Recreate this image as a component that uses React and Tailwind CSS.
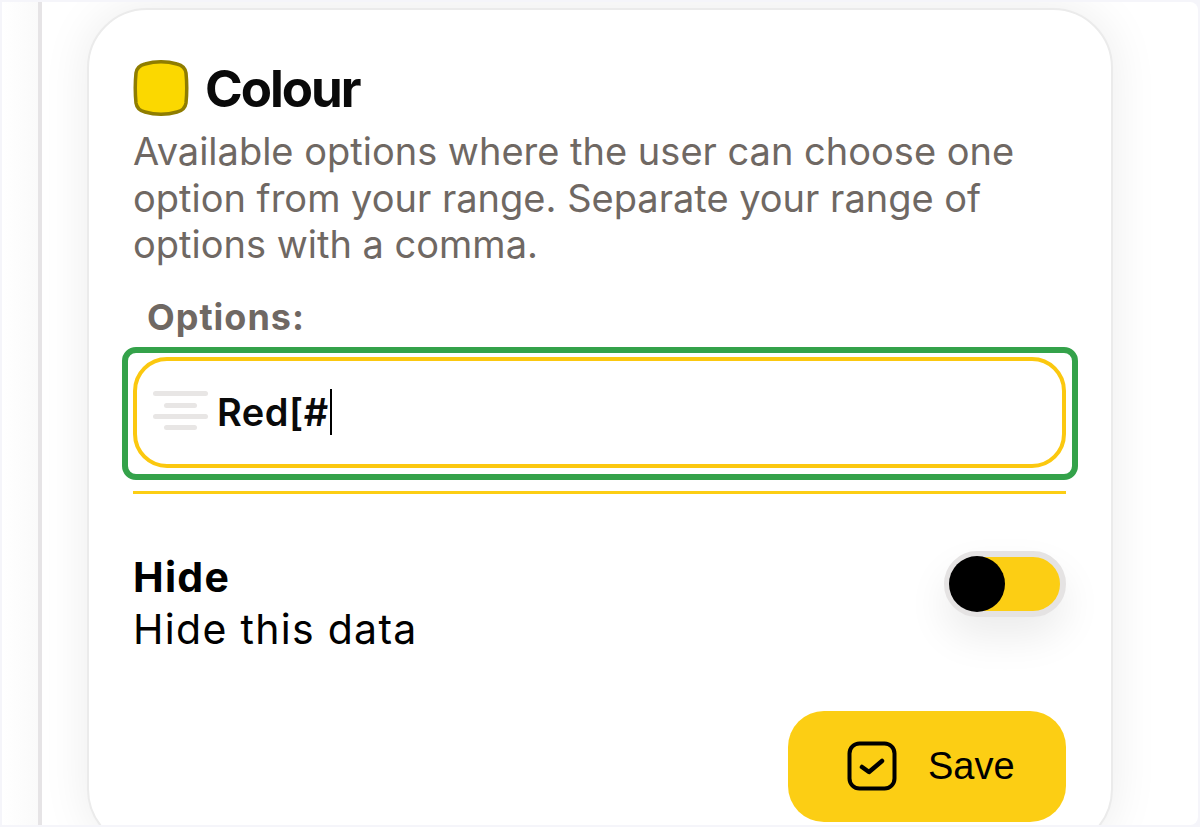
import React from "react";

const BarrelIcon = () => (
  <svg width="56" height="56" viewBox="0 0 56 56" className="shrink-0">
    <path
      d="M12 4 Q28 -0.500 44 4 Q52 6 53 13 Q54.500 28 53 43 Q52 50 44 52 Q28 56.500 12 52 Q4 50 3 43 Q1.500 28 3 13 Q4 6 12 4 Z"
      fill="#fbd800"
      stroke="#8f7d00"
      strokeWidth="3.500"
    />
  </svg>
);

const LinesIcon = () => (
  <svg width="56" height="44" viewBox="0 0 56 44" className="shrink-0">
    <rect x="0" y="1" width="55" height="5" rx="2.500" fill="#e8e6e5" />
    <rect x="11" y="13" width="33" height="5" rx="2.500" fill="#e8e6e5" />
    <rect x="0" y="24" width="55" height="5" rx="2.500" fill="#e8e6e5" />
    <rect x="11" y="35" width="33" height="5" rx="2.500" fill="#e8e6e5" />
  </svg>
);

const CheckSquare = () => (
  <svg width="50" height="50" viewBox="0 0 50 50" fill="none" className="shrink-0">
    <rect x="2.500" y="2.500" width="45" height="45" rx="10" stroke="#000" strokeWidth="4" />
    <path d="M15 26 L22 31 L35 20" stroke="#000" strokeWidth="4.500" strokeLinecap="round" strokeLinejoin="round" />
  </svg>
);

export default function App() {
  return (
    <div className="h-[827px] w-[1200px] overflow-hidden bg-[#f5f5fa] p-[2px]" style={{ fontFamily: "Inter, 'Noto Sans', sans-serif" }}>
      <div className="flex h-full rounded-lg bg-white">
        <div className="w-[40px] shrink-0 border-r-[4px] border-[#e6e4e6] bg-gradient-to-r from-white to-[#fafafa]" />
        <div className="flex-1 overflow-hidden pl-[45px] pt-[6px]">
          <div className="h-[841px] w-[1026px] rounded-[60px] border-2 border-[#ebebeb] bg-white px-[44px] pt-[50px] shadow-[0_0_48px_rgba(0,0,0,0.08)]">
            <div className="flex h-[56px] items-center gap-[16px]">
              <BarrelIcon />
              <h1 className="text-[51px] font-bold leading-none tracking-[-2px] text-[#0a0a0a]">Colour</h1>
            </div>
            <p className="mt-[12px] w-[920px] text-[38px] leading-[46.500px] text-[#6f6863]">
              Available options where the user can choose one option from your range. Separate your range of options with a comma.
            </p>
            <label className="mt-[27px] block pl-[14px] text-[36px] font-bold leading-[44px] tracking-[1px] text-[#6f6863]">Options:</label>
            <div className="relative mt-[18px] flex h-[111px] w-[933px] items-center rounded-[34px] border-[4px] border-[#fbc80f] pl-[16px]">
              <LinesIcon />
              <span className="ml-[8px] text-[38px] font-semibold leading-none tracking-[0.500px] text-[#0a0a0a]">Red[#</span>
              <span className="ml-[1px] h-[46px] w-[2px] bg-black" />
              <div className="absolute -top-[14px] -right-[16px] -bottom-[16px] -left-[15px] rounded-[14px] border-[6px] border-[#34a24a]" />
            </div>
            <div className="mt-[23px] h-[3px] w-[933px] bg-[#fcce14]" />
            <div className="mt-[53px] flex w-[933px] items-start justify-between">
              <div className="pt-[4px] text-[41px] leading-[52px] tracking-[1.300px] text-black">
                <div className="font-bold">Hide</div>
                <div>Hide this data</div>
              </div>
              <div className="mt-[4px] flex h-[66px] w-[122px] items-center rounded-full border-[6px] border-[#e5e3e3] bg-[#fcce14] shadow-[0_20px_40px_rgba(0,0,0,0.08)]">
                <div className="-ml-[1px] h-[56px] w-[56px] rounded-full bg-black" />
              </div>
            </div>
            <div className="flex w-[933px] justify-end pt-[56px]">
              <button className="flex h-[111px] w-[278px] items-center rounded-[36px] bg-[#fcce14] pl-[59px] text-[38px] text-black" style={{ fontFamily: "'Liberation Sans', sans-serif" }}>
                <CheckSquare />
                <span className="ml-[31px]">Save</span>
              </button>
            </div>
          </div>
        </div>
      </div>
    </div>
  );
}
